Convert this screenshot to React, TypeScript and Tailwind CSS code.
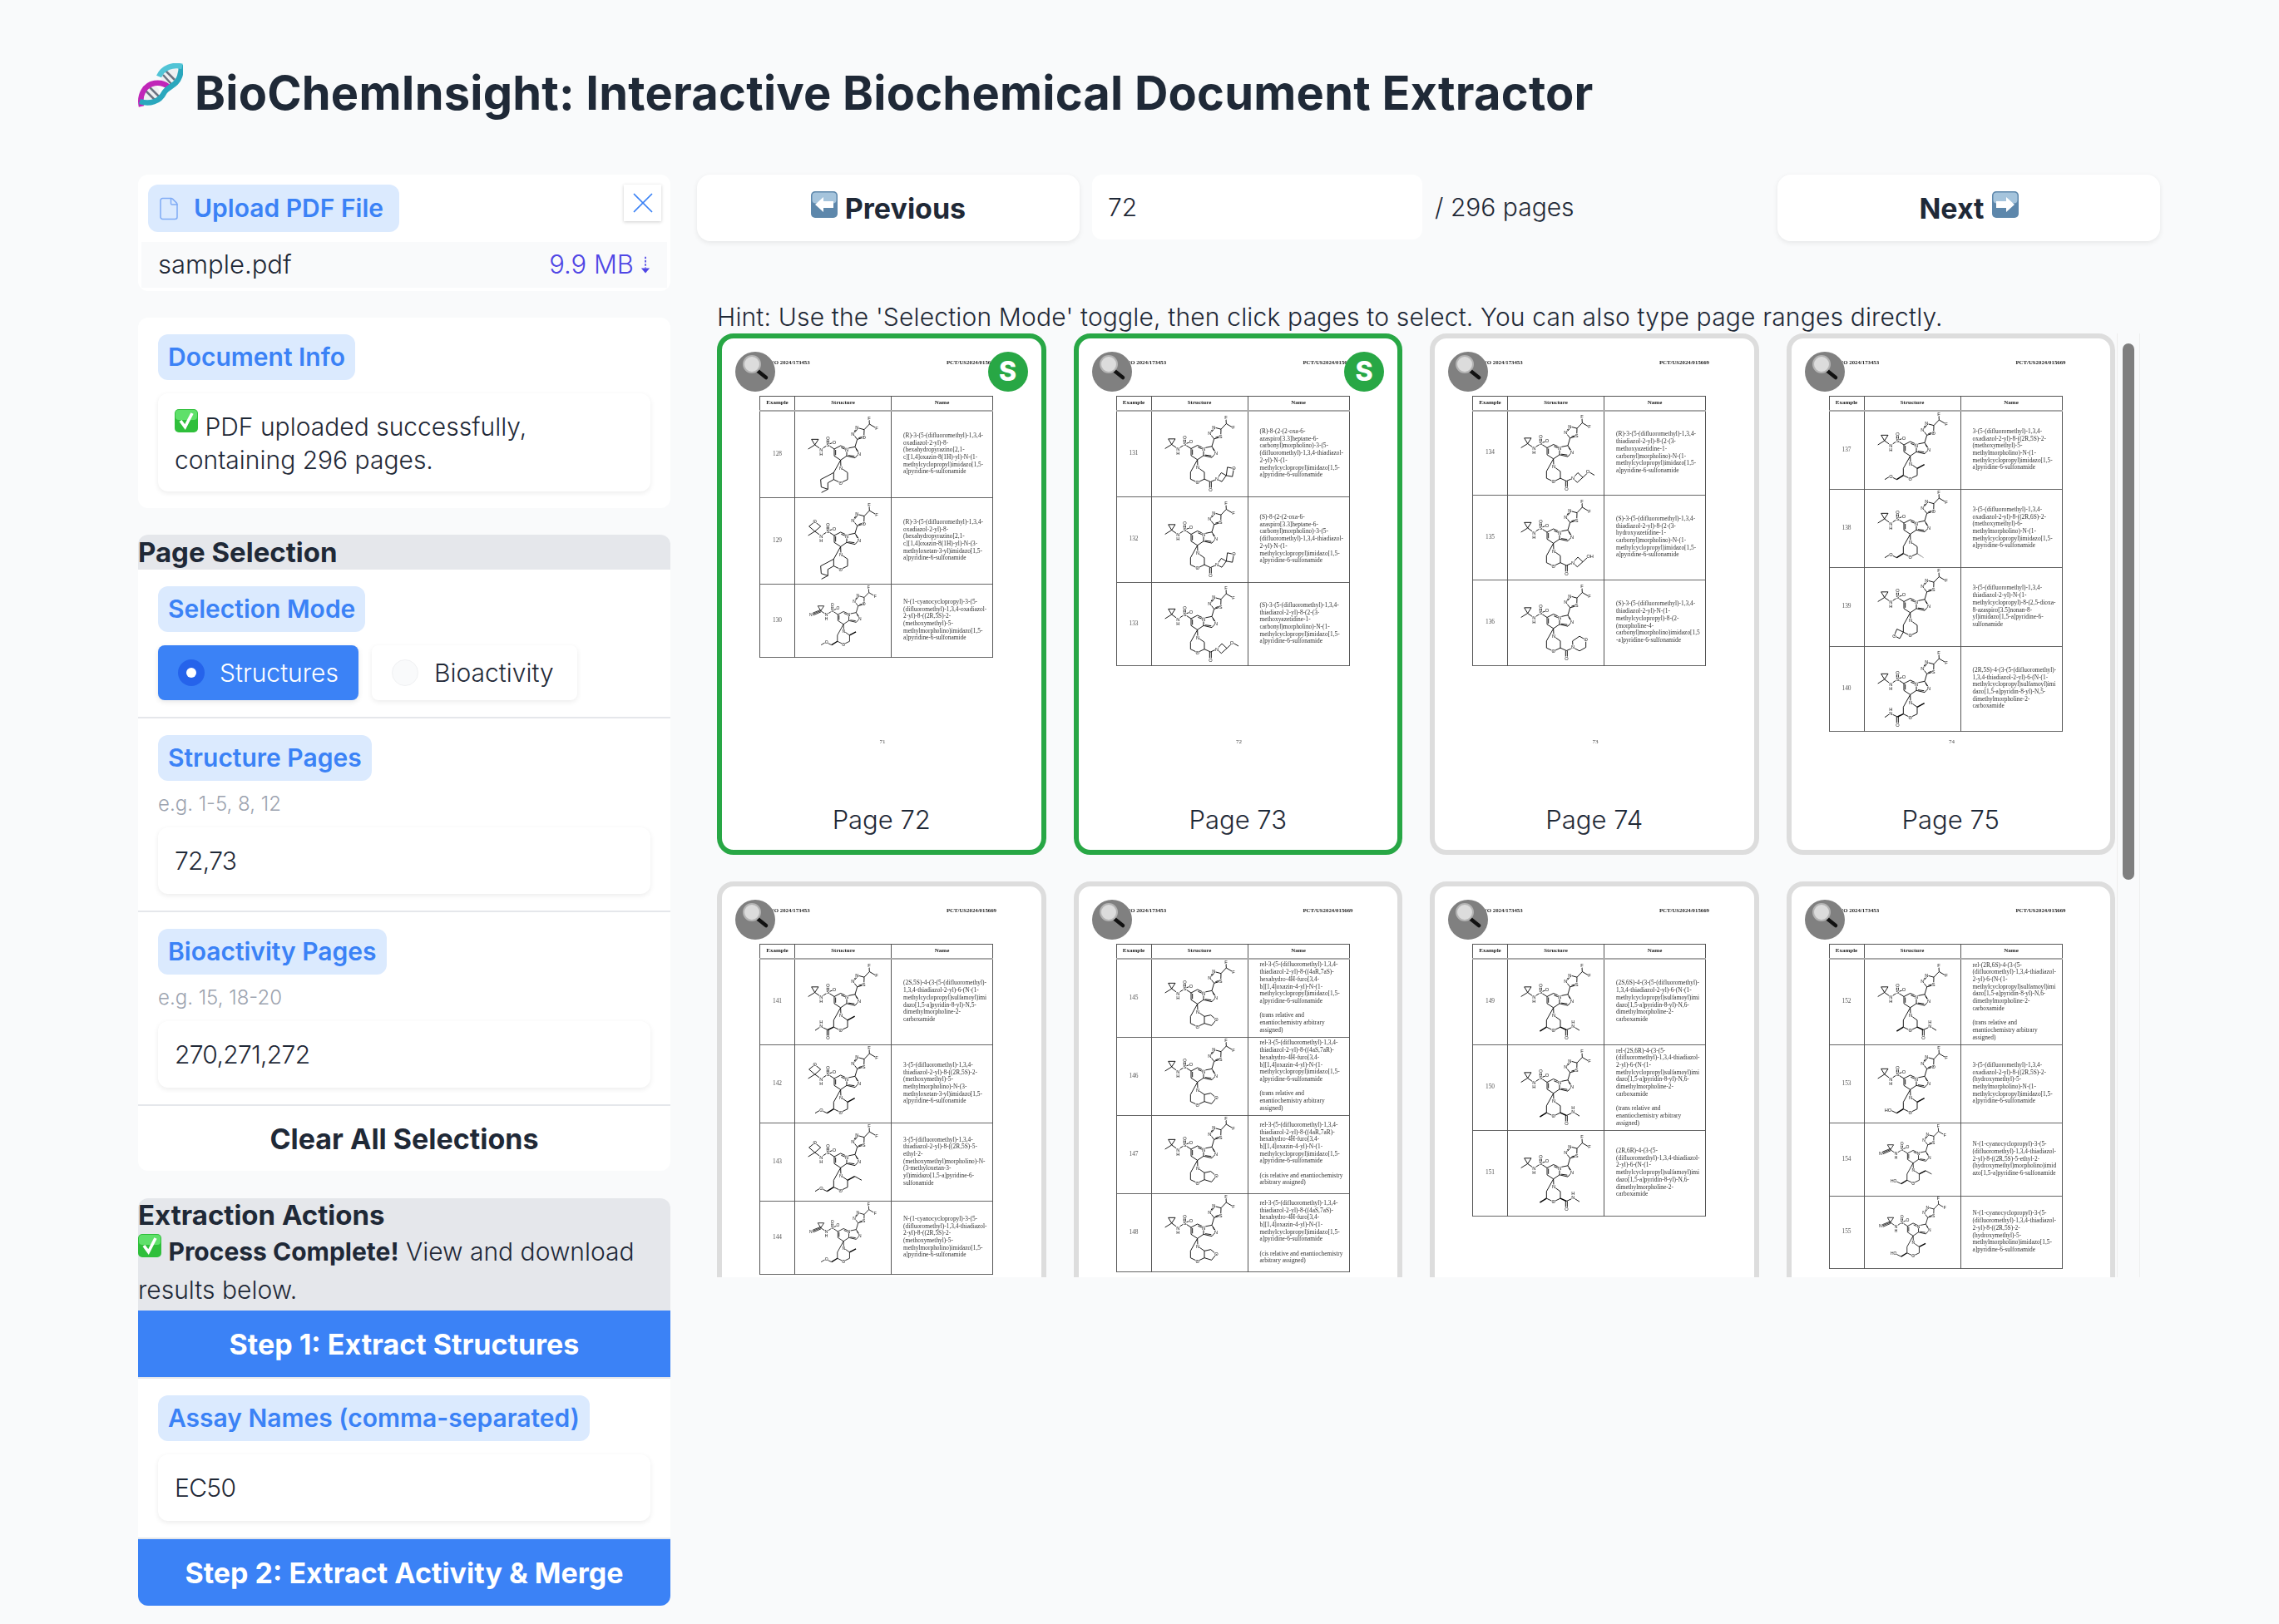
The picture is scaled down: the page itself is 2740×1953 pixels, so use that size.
import type { ReactNode } from "react";
import { File, X } from "lucide-react";

type Row = { n: number; h: number; head: string; het: string; tail: string; name: string };
type Page = { label: number; no?: string; selected?: boolean; rows: Row[] };

const cp = "cp";
const ox = "ox";
const cn = "cn";

const pages: Page[] = [
  {
    label: 72, no: "71", selected: true,
    rows: [
      { n: 128, h: 104, head: cp, het: "O", tail: "pip", name: "(R)-3-(5-(difluoromethyl)-1,3,4-\noxadiazol-2-yl)-8-\n(hexahydropyrazino[2,1-\nc][1,4]oxazin-8(1H)-yl)-N-(1-\nmethylcyclopropyl)imidazo[1,5-\na]pyridine-6-sulfonamide" },
      { n: 129, h: 104, head: ox, het: "O", tail: "pip", name: "(R)-3-(5-(difluoromethyl)-1,3,4-\noxadiazol-2-yl)-8-\n(hexahydropyrazino[2,1-\nc][1,4]oxazin-8(1H)-yl)-N-(3-\nmethyloxetan-3-yl)imidazo[1,5-\na]pyridine-6-sulfonamide" },
      { n: 130, h: 88, head: cn, het: "O", tail: "ome", name: "N-(1-cyanocyclopropyl)-3-(5-\n(difluoromethyl)-1,3,4-oxadiazol-\n2-yl)-8-((2R,5S)-2-\n(methoxymethyl)-5-\nmethylmorpholino)imidazo[1,5-\na]pyridine-6-sulfonamide" },
    ],
  },
  {
    label: 73, no: "72", selected: true,
    rows: [
      { n: 131, h: 103, head: cp, het: "S", tail: "spiro", name: "(R)-8-(2-(2-oxa-6-\nazaspiro[3.3]heptane-6-\ncarbonyl)morpholino)-3-(5-\n(difluoromethyl)-1,3,4-thiadiazol-\n2-yl)-N-(1-\nmethylcyclopropyl)imidazo[1,5-\na]pyridine-6-sulfonamide" },
      { n: 132, h: 103, head: cp, het: "S", tail: "spiro", name: "(S)-8-(2-(2-oxa-6-\nazaspiro[3.3]heptane-6-\ncarbonyl)morpholino)-3-(5-\n(difluoromethyl)-1,3,4-thiadiazol-\n2-yl)-N-(1-\nmethylcyclopropyl)imidazo[1,5-\na]pyridine-6-sulfonamide" },
      { n: 133, h: 100, head: cp, het: "S", tail: "azome", name: "(S)-3-(5-(difluoromethyl)-1,3,4-\nthiadiazol-2-yl)-8-(2-(3-\nmethoxyazetidine-1-\ncarbonyl)morpholino)-N-(1-\nmethylcyclopropyl)imidazo[1,5-\na]pyridine-6-sulfonamide" },
    ],
  },
  {
    label: 74, no: "73",
    rows: [
      { n: 134, h: 101, head: cp, het: "S", tail: "azome", name: "(R)-3-(5-(difluoromethyl)-1,3,4-\nthiadiazol-2-yl)-8-(2-(3-\nmethoxyazetidine-1-\ncarbonyl)morpholino)-N-(1-\nmethylcyclopropyl)imidazo[1,5-\na]pyridine-6-sulfonamide" },
      { n: 135, h: 102, head: cp, het: "S", tail: "azoh", name: "(S)-3-(5-(difluoromethyl)-1,3,4-\nthiadiazol-2-yl)-8-(2-(3-\nhydroxyazetidine-1-\ncarbonyl)morpholino)-N-(1-\nmethylcyclopropyl)imidazo[1,5-\na]pyridine-6-sulfonamide" },
      { n: 136, h: 103, head: cp, het: "S", tail: "morph", name: "(S)-3-(5-(difluoromethyl)-1,3,4-\nthiadiazol-2-yl)-N-(1-\nmethylcyclopropyl)-8-(2-\n(morpholine-4-\ncarbonyl)morpholino)imidazo[1,5\n-a]pyridine-6-sulfonamide" },
    ],
  },
  {
    label: 75, no: "74",
    rows: [
      { n: 137, h: 94, head: cp, het: "O", tail: "ome", name: "3-(5-(difluoromethyl)-1,3,4-\noxadiazol-2-yl)-8-((2R,5S)-2-\n(methoxymethyl)-5-\nmethylmorpholino)-N-(1-\nmethylcyclopropyl)imidazo[1,5-\na]pyridine-6-sulfonamide" },
      { n: 138, h: 94, head: cp, het: "O", tail: "ome6", name: "3-(5-(difluoromethyl)-1,3,4-\noxadiazol-2-yl)-8-((2R,6S)-2-\n(methoxymethyl)-6-\nmethylmorpholino)-N-(1-\nmethylcyclopropyl)imidazo[1,5-\na]pyridine-6-sulfonamide" },
      { n: 139, h: 95, head: cp, het: "S", tail: "oxa", name: "3-(5-(difluoromethyl)-1,3,4-\nthiadiazol-2-yl)-N-(1-\nmethylcyclopropyl)-8-(2,5-dioxa-\n8-azaspiro[3.5]nonan-8-\nyl)imidazo[1,5-a]pyridine-6-\nsulfonamide" },
      { n: 140, h: 102, head: cp, het: "S", tail: "amide", name: "(2R,5S)-4-(3-(5-(difluoromethyl)-\n1,3,4-thiadiazol-2-yl)-6-(N-(1-\nmethylcyclopropyl)sulfamoyl)imi\ndazo[1,5-a]pyridin-8-yl)-N,5-\ndimethylmorpholine-2-\ncarboxamide" },
    ],
  },
  {
    label: 76,
    rows: [
      { n: 141, h: 103, head: cp, het: "S", tail: "amide", name: "(2S,5S)-4-(3-(5-(difluoromethyl)-\n1,3,4-thiadiazol-2-yl)-6-(N-(1-\nmethylcyclopropyl)sulfamoyl)imi\ndazo[1,5-a]pyridin-8-yl)-N,5-\ndimethylmorpholine-2-\ncarboxamide" },
      { n: 142, h: 94, head: ox, het: "S", tail: "ome", name: "3-(5-(difluoromethyl)-1,3,4-\nthiadiazol-2-yl)-8-((2R,5S)-2-\n(methoxymethyl)-5-\nmethylmorpholino)-N-(3-\nmethyloxetan-3-yl)imidazo[1,5-\na]pyridine-6-sulfonamide" },
      { n: 143, h: 94, head: ox, het: "S", tail: "ethyl", name: "3-(5-(difluoromethyl)-1,3,4-\nthiadiazol-2-yl)-8-((2R,5S)-5-\nethyl-2-\n(methoxymethyl)morpholino)-N-\n(3-methyloxetan-3-\nyl)imidazo[1,5-a]pyridine-6-\nsulfonamide" },
      { n: 144, h: 88, head: cn, het: "S", tail: "ome", name: "N-(1-cyanocyclopropyl)-3-(5-\n(difluoromethyl)-1,3,4-thiadiazol-\n2-yl)-8-((2R,5S)-2-\n(methoxymethyl)-5-\nmethylmorpholino)imidazo[1,5-\na]pyridine-6-sulfonamide" },
    ],
  },
  {
    label: 77,
    rows: [
      { n: 145, h: 94, head: cp, het: "S", tail: "furo", name: "rel-3-(5-(difluoromethyl)-1,3,4-\nthiadiazol-2-yl)-8-((4aR,7aS)-\nhexahydro-4H-furo[3,4-\nb][1,4]oxazin-4-yl)-N-(1-\nmethylcyclopropyl)imidazo[1,5-\na]pyridine-6-sulfonamide\n\n(trans relative and\nenantiochemistry arbitrary\nassigned)" },
      { n: 146, h: 94, head: cp, het: "S", tail: "furo", name: "rel-3-(5-(difluoromethyl)-1,3,4-\nthiadiazol-2-yl)-8-((4aS,7aR)-\nhexahydro-4H-furo[3,4-\nb][1,4]oxazin-4-yl)-N-(1-\nmethylcyclopropyl)imidazo[1,5-\na]pyridine-6-sulfonamide\n\n(trans relative and\nenantiochemistry arbitrary\nassigned)" },
      { n: 147, h: 94, head: cp, het: "S", tail: "furo", name: "rel-3-(5-(difluoromethyl)-1,3,4-\nthiadiazol-2-yl)-8-((4aR,7aR)-\nhexahydro-4H-furo[3,4-\nb][1,4]oxazin-4-yl)-N-(1-\nmethylcyclopropyl)imidazo[1,5-\na]pyridine-6-sulfonamide\n\n(cis relative and enantiochemistry\narbitrary assigned)" },
      { n: 148, h: 94, head: cp, het: "S", tail: "furo", name: "rel-3-(5-(difluoromethyl)-1,3,4-\nthiadiazol-2-yl)-8-((4aS,7aS)-\nhexahydro-4H-furo[3,4-\nb][1,4]oxazin-4-yl)-N-(1-\nmethylcyclopropyl)imidazo[1,5-\na]pyridine-6-sulfonamide\n\n(cis relative and enantiochemistry\narbitrary assigned)" },
    ],
  },
  {
    label: 78,
    rows: [
      { n: 149, h: 103, head: cp, het: "S", tail: "amideR", name: "(2S,6S)-4-(3-(5-(difluoromethyl)-\n1,3,4-thiadiazol-2-yl)-6-(N-(1-\nmethylcyclopropyl)sulfamoyl)imi\ndazo[1,5-a]pyridin-8-yl)-N,6-\ndimethylmorpholine-2-\ncarboxamide" },
      { n: 150, h: 103, head: cp, het: "S", tail: "amideR", name: "rel-(2S,6R)-4-(3-(5-\n(difluoromethyl)-1,3,4-thiadiazol-\n2-yl)-6-(N-(1-\nmethylcyclopropyl)sulfamoyl)imi\ndazo[1,5-a]pyridin-8-yl)-N,6-\ndimethylmorpholine-2-\ncarboxamide\n\n(trans relative and\nenantiochemistry arbitrary\nassigned)" },
      { n: 151, h: 103, head: cp, het: "S", tail: "amideR", name: "(2R,6R)-4-(3-(5-\n(difluoromethyl)-1,3,4-thiadiazol-\n2-yl)-6-(N-(1-\nmethylcyclopropyl)sulfamoyl)imi\ndazo[1,5-a]pyridin-8-yl)-N,6-\ndimethylmorpholine-2-\ncarboxamide" },
    ],
  },
  {
    label: 79,
    rows: [
      { n: 152, h: 103, head: cp, het: "S", tail: "amideR", name: "rel-(2R,6S)-4-(3-(5-\n(difluoromethyl)-1,3,4-thiadiazol-\n2-yl)-6-(N-(1-\nmethylcyclopropyl)sulfamoyl)imi\ndazo[1,5-a]pyridin-8-yl)-N,6-\ndimethylmorpholine-2-\ncarboxamide\n\n(trans relative and\nenantiochemistry arbitrary\nassigned)" },
      { n: 153, h: 94, head: cp, het: "O", tail: "ho", name: "3-(5-(difluoromethyl)-1,3,4-\noxadiazol-2-yl)-8-((2R,5S)-2-\n(hydroxymethyl)-5-\nmethylmorpholino)-N-(1-\nmethylcyclopropyl)imidazo[1,5-\na]pyridine-6-sulfonamide" },
      { n: 154, h: 88, head: cn, het: "S", tail: "hoEt", name: "N-(1-cyanocyclopropyl)-3-(5-\n(difluoromethyl)-1,3,4-thiadiazol-\n2-yl)-8-((2R,5S)-5-ethyl-2-\n(hydroxymethyl)morpholino)imid\nazo[1,5-a]pyridine-6-sulfonamide" },
      { n: 155, h: 87, head: cn, het: "S", tail: "ho", name: "N-(1-cyanocyclopropyl)-3-(5-\n(difluoromethyl)-1,3,4-thiadiazol-\n2-yl)-8-((2R,5S)-2-\n(hydroxymethyl)-5-\nmethylmorpholino)imidazo[1,5-\na]pyridine-6-sulfonamide" },
    ],
  },
];

function L({ x, y, t }: { x: number; y: number; t: string }) {
  return (
    <text x={x} y={y + 6} textAnchor="middle" fontSize="17" fontFamily="Liberation Sans" fill="#111" stroke="#fff" strokeWidth="4" paintOrder="stroke">
      {t}
    </text>
  );
}

function Tail({ kind }: { kind: string }) {
  const carbonyl = <path d="M189 235L211 245M208 245V268M214 245V268M211 245L234 235" />;
  const methyl = <path d="M189 210L215 196" strokeWidth="4.5" />;
  const arm = <path d="M139 235L115 250" strokeWidth="4.5" />;
  switch (kind) {
    case "pip":
      return <path d="M139 235L118 247L118 270L95 282M139 210L117 222L92 235L94 262L118 270" />;
    case "spiro":
      return (
        <>
          {carbonyl}
          <path d="M234 235L250 212L268 222L252 244ZM268 222L272 192L295 197L290 226Z" />
          <L x={234} y={235} t="N" />
          <L x={295} y={197} t="O" />
          <L x={211} y={275} t="O" />
        </>
      );
    case "azome":
    case "azoh":
      return (
        <>
          {carbonyl}
          <path d="M234 235L252 215L270 232L250 250ZM270 232L288 215" />
          {kind === "azome" && <path d="M292 212L312 224" />}
          <L x={234} y={235} t="N" />
          <L x={kind === "azome" ? 288 : 296} y={212} t={kind === "azome" ? "O" : "OH"} />
          <L x={211} y={275} t="O" />
        </>
      );
    case "morph":
      return (
        <>
          {carbonyl}
          <path d="M234 233L233 210L258 193L281 206L281 233L258 246Z" />
          <L x={234} y={233} t="N" />
          <L x={281} y={206} t="O" />
          <L x={211} y={275} t="O" />
        </>
      );
    case "ome":
    case "ethyl":
      return (
        <>
          {methyl}
          {kind === "ethyl" && <path d="M215 196L240 210" />}
          {arm}
          <path d="M115 250L95 240M92 238L72 250" />
          <L x={94} y={238} t="O" />
        </>
      );
    case "ome6":
      return (
        <>
          <path d="M189 235L212 250" strokeDasharray="2 2" />
          {arm}
          <path d="M115 250L95 240M92 238L72 250" />
          <L x={94} y={238} t="O" />
        </>
      );
    case "ho":
    case "hoEt":
      return (
        <>
          {methyl}
          {kind === "hoEt" && <path d="M215 196L240 210" />}
          {arm}
          <path d="M115 250L95 240" />
          <L x={84} y={238} t="HO" />
        </>
      );
    case "oxa":
      return (
        <>
          <path d="M139 235L116 224L106 248L126 258Z" />
          <L x={106} y={250} t="O" />
        </>
      );
    case "amide":
      return (
        <>
          {methyl}
          <path d="M139 235L118 245" strokeWidth="4.5" />
          <path d="M118 245L94 234M115 245V268M121 245V268M88 236L72 247" />
          <L x={94} y={233} t="N" />
          <L x={94} y={217} t="H" />
          <L x={118} y={275} t="O" />
        </>
      );
    case "amideR":
      return (
        <>
          {arm}
          <path d="M189 235L211 245" strokeWidth="4.5" />
          <path d="M211 245L235 234M208 245V268M214 245V268M241 236L258 247" />
          <L x={235} y={233} t="N" />
          <L x={235} y={217} t="H" />
          <L x={211} y={275} t="O" />
        </>
      );
    case "furo":
      return (
        <>
          <path d="M189 210L212 205L232 222L215 243L189 235" />
          <L x={232} y={222} t="O" />
        </>
      );
    default:
      return null;
  }
}

// generic imidazopyridine sulfonamide drawing, coordinates are 3x the cell pixels
function Molecule({ head, het, tail, h }: { head: string; het: string; tail: string; h: number }) {
  const top = (292 - h * 3) / 2;
  const scale = h < 92 ? 0.88 : 1;
  return (
    <svg viewBox={`0 ${top} 348 ${(h - 1) * 3}`} width="116" height={h - 1} className="block">
      <g transform={`translate(${scale < 1 ? 30 : 0} ${scale < 1 ? 12 : 0}) scale(${scale})`} fill="none" stroke="#000" strokeWidth="2.7">
        {head === "cn" ? (
          <path d="M59 90H84L71 110ZM71 110L88 122M71 110L36 124M70 106L38 119M72 114L40 128" />
        ) : head === "ox" ? (
          <path d="M71 110L92 92L71 75L50 92ZM71 110L47 125M71 110L88 122" />
        ) : (
          <path d="M59 90H84L71 110ZM71 110L47 125M71 110L88 122" />
        )}
        <path d="M100 122L118 110M115 108V92M121 108V92M120 108L136 102M118 110L141 125" />
        <path d="M141 125L164 113L186 123L186 150L164 165L141 150Z" />
        <path d="M146 128V147M166 120L181 126M186 123L216 117L231 140L216 157L186 150M219 124L228 138M214 151L192 148" />
        <path d="M216 117L224 90M224 90L208 70L223 48L249 55L248 83ZM212 68L225 53M229 85L245 80M249 55L268 35L267 20M268 35L288 47" />
        <path d="M164 165L165 193L189 210L189 235L164 247L139 235L139 210Z" />
        <Tail kind={tail} />
        {head === "cn" && <L x={30} y={125} t="N" />}
        {head === "ox" && <L x={71} y={75} t="O" />}
        <L x={94} y={127} t="N" />
        <L x={94} y={143} t="H" />
        <L x={118} y={110} t="S" />
        <L x={118} y={85} t="O" />
        <L x={141} y={100} t="O" />
        <L x={186} y={127} t="N" />
        <L x={231} y={142} t="N" />
        <L x={208} y={70} t="N" />
        <L x={223} y={48} t="N" />
        <L x={248} y={83} t={het} />
        <L x={267} y={13} t="F" />
        <L x={294} y={50} t="F" />
        <L x={165} y={193} t="N" />
        <L x={164} y={247} t="O" />
      </g>
    </svg>
  );
}

function Check() {
  return (
    <svg viewBox="0 0 28 36" className="inline-block w-[28px] h-[36px] align-[-4px]">
      <rect x="0" y="0" width="28" height="28" rx="5" fill="#2fbf3b" />
      <rect x="1" y="1" width="26" height="12" rx="4" fill="#5fe06a" />
      <path d="M7 14L12.5 21.5L21 5" fill="none" stroke="#fff" strokeWidth="3.6" />
    </svg>
  );
}

function ArrowBox({ left }: { left?: boolean }) {
  return (
    <svg viewBox="0 0 32 32" className="w-[32px] h-[32px]">
      <rect width="32" height="32" rx="5" fill="#5d87ab" />
      <rect x="1.5" y="1.5" width="29" height="13" rx="4" fill="#a5c4dc" />
      <path d={left ? "M5 16L15 7V12H27V20H15V25Z" : "M27 16L17 7V12H5V20H17V25Z"} fill="#fff" />
    </svg>
  );
}

function Magnifier() {
  return (
    <svg viewBox="0 0 48 48" className="w-[48px] h-[48px]">
      <circle cx="24" cy="24" r="24" fill="#808080" />
      <path d="M27 23L37 31" stroke="#111" strokeWidth="4.5" strokeLinecap="round" />
      <circle cx="20" cy="15" r="10" fill="#dcdcdc" stroke="#b4b4b4" strokeWidth="2" />
    </svg>
  );
}

function Dna() {
  return (
    <svg viewBox="0 0 54 54" className="w-[54px] h-[54px] shrink-0">
      <ellipse cx="15" cy="38" rx="12" ry="8" transform="rotate(-45 15 38)" fill="#eef0f2" />
      <ellipse cx="38" cy="15" rx="12" ry="8" transform="rotate(-45 38 15)" fill="#eef0f2" />
      <path d="M9 33L20 44M14 29L25 40M33 9L44 20M30 14L40 25" stroke="#6b7280" strokeWidth="2.5" />
      <path d="M4 52C1 38 8 26 20 24C27 23 31 24 36 28" fill="none" stroke="#c026b8" strokeWidth="6.5" />
      <path d="M2 46C14 50 26 46 31 36C35 28 46 28 50 16C52 10 52 6 52 2" fill="none" stroke="#2aa7bd" strokeWidth="6.5" />
      <path d="M53 4C42 1 30 5 25 16" fill="none" stroke="#52c4d6" strokeWidth="6.5" />
    </svg>
  );
}

function Chip({ children }: { children: ReactNode }) {
  return <div className="inline-flex w-fit items-center rounded-xl bg-[#dbeafe] px-3 h-[55px] text-[30px] font-semibold text-[#3b82f6]">{children}</div>;
}

function TextBox({ value }: { value: string }) {
  return <div className="flex h-[80px] items-center rounded-xl bg-white px-5 text-[30px] font-light tracking-[-0.7px] shadow-[0_2px_6px_rgba(0,0,0,0.08)]">{value}</div>;
}

function PageCard({ page }: { page: Page }) {
  return (
    <div className={`relative h-[627px] rounded-[20px] border-[6px] bg-white ${page.selected ? "border-[#28a745]" : "border-[#dddddd]"}`}>
      <div className="absolute left-[16px] top-[16px] z-10"><Magnifier /></div>
      {page.selected && (
        <div className="absolute right-[16px] top-[16px] z-10 flex h-[48px] w-[48px] items-center justify-center rounded-full bg-[#28a745] text-[32px] font-extrabold text-white">S</div>
      )}
      <div className="flex h-[556px] flex-col pl-[45px] pt-[24px] font-['Liberation_Serif',serif] text-[#222] blur-[0.3px]">
        <div className="flex h-[45px] w-[280px] justify-between pl-[11px] text-[6.8px] font-bold leading-[10px]">
          <span>WO 2024/173453</span>
          <span className="-mr-[5px]">PCT/US2024/015669</span>
        </div>
        <table className="w-[280px] table-fixed border-collapse border border-[#555] text-[7.4px] leading-[8.7px]">
          <colgroup>
            <col className="w-[42px]" />
            <col className="w-[116px]" />
            <col className="w-[122px]" />
          </colgroup>
          <thead>
            <tr className="h-[17px] border-b-2 border-b-[#aaa] text-[7px] font-bold">
              <th className="border-x border-[#555] text-center">Example</th>
              <th className="border-x border-[#555] text-center">Structure</th>
              <th className="border-x border-[#555] text-center">Name</th>
            </tr>
          </thead>
          <tbody>
            {page.rows.map((row) => (
              <tr key={row.n} style={{ height: row.h }} className="border-b border-[#666]">
                <td className="border-x border-[#555] text-center text-[#555]">{row.n}</td>
                <td className="border-x border-[#555] p-0"><Molecule head={row.head} het={row.het} tail={row.tail} h={row.h} /></td>
                <td className="overflow-hidden border-x border-[#555] pl-[14px] pr-0 whitespace-pre-line text-[#333]">{row.name}</td>
              </tr>
            ))}
          </tbody>
        </table>
        {page.no && <div className="mb-[66px] mt-auto w-[280px] pl-[16px] text-center text-[7px] leading-[10px] text-[#444]">{page.no}</div>}
      </div>
      <div className="flex h-[46px] items-center justify-center text-[31px] font-light">Page {page.label}</div>
    </div>
  );
}

export default function App() {
  return (
    <div className="min-h-[1953px] bg-[#f9fafb] pl-[166px] pb-[22px] pt-[75px] font-['Inter',sans-serif] text-[#1f2937]">
      <div className="flex h-[55px] items-center gap-[14px]">
        <Dna />
        <h1 className="mt-[18px] text-[56px] font-bold tracking-[0.2px]">BioChemInsight: Interactive Biochemical Document Extractor</h1>
      </div>

      <div className="mt-[80px] flex gap-[32px]">
        {/* Sidebar */}
        <div className="flex w-[640px] shrink-0 flex-col">
          <div className="h-[140px] rounded-xl bg-white">
            <div className="flex items-start justify-between pl-[12px] pr-[11px] pt-[12px]">
              <div className="flex h-[57px] w-[302px] items-center gap-[15px] rounded-xl bg-[#dbeafe] pl-[10px] text-[30px] font-semibold text-[#3b82f6]">
                <File className="h-[30px] w-[30px] text-[#7fabf5]" strokeWidth={1.2} />
                Upload PDF File
              </div>
              <div className="flex h-[44px] w-[45px] items-center justify-center bg-white shadow-[0_1px_4px_rgba(0,0,0,0.2)]">
                <X className="h-[42px] w-[42px] text-[#3b82f6]" strokeWidth={1} />
              </div>
            </div>
            <div className="mx-[4px] mt-[12px] flex h-[55px] items-center justify-between bg-[#f9fafb] pl-[20px] pr-[20px] text-[31px] font-light">
              <span>sample.pdf</span>
              <span className="flex items-center gap-[8px] text-[#4f46e5]">
                9.9 MB
                <svg viewBox="0 0 14 28" className="h-[28px] w-[12px]">
                  <path d="M7 2V18" stroke="#4f46e5" strokeWidth="2" strokeDasharray="3 2" />
                  <path d="M1 18H13L7 25Z" fill="#4f46e5" />
                </svg>
              </span>
            </div>
          </div>

          <div className="mt-[32px] rounded-xl bg-white px-[24px] pt-[20px] pb-[20px]">
            <Chip>Document Info</Chip>
            <div className="mt-[16px] h-[118px] rounded-xl bg-white px-[20px] pt-[19px] text-[30px] font-light leading-[40px] shadow-[0_2px_6px_rgba(0,0,0,0.08)]">
              <Check /> PDF uploaded successfully, containing 296 pages.
            </div>
          </div>

          <div className="mt-[32px] overflow-hidden rounded-xl bg-white">
            <div className="h-[42px] bg-[#e5e7eb] text-[33px] font-bold leading-[42px]">Page Selection</div>
            <div className="border-b-2 border-[#e5e7eb] px-[24px] pt-[20px] pb-[20px]">
              <Chip>Selection Mode</Chip>
              <div className="mt-[16px] flex gap-[16px] text-[30px] font-light">
                <div className="flex h-[66px] w-[241px] items-center gap-[18px] rounded-lg bg-[#3b82f6] px-[24px] text-white shadow-[0_2px_6px_rgba(0,0,0,0.1)]">
                  <span className="flex h-[32px] w-[32px] items-center justify-center rounded-full bg-[#2563eb]"><span className="h-[12px] w-[12px] rounded-full bg-white" /></span>
                  Structures
                </div>
                <div className="flex h-[66px] w-[247px] items-center gap-[19px] rounded-lg bg-white px-[24px] shadow-[0_2px_6px_rgba(0,0,0,0.08)]">
                  <span className="h-[32px] w-[32px] rounded-full border border-[#f0f1f3] bg-[#f9fafb]" />
                  Bioactivity
                </div>
              </div>
            </div>
            <div className="border-b-2 border-[#e5e7eb] px-[24px] pt-[20px] pb-[20px]">
              <Chip>Structure Pages</Chip>
              <div className="flex h-[56px] items-center text-[24px] font-light text-[#9ca3af]">e.g. 1-5, 8, 12</div>
              <TextBox value="72,73" />
            </div>
            <div className="border-b-2 border-[#e5e7eb] px-[24px] pt-[20px] pb-[20px]">
              <Chip>Bioactivity Pages</Chip>
              <div className="flex h-[56px] items-center text-[24px] font-light text-[#9ca3af]">e.g. 15, 18-20</div>
              <TextBox value="270,271,272" />
            </div>
            <div className="flex h-[78px] items-center justify-center text-[34px] font-bold">Clear All Selections</div>
          </div>

          <div className="mt-[33px] overflow-hidden rounded-xl bg-white">
            <div className="h-[135px] bg-[#e5e7eb]">
              <div className="h-[41px] text-[33px] font-bold leading-[40px]">Extraction Actions</div>
              <p className="text-[30px] font-light leading-[46px]">
                <Check /> <b className="font-bold">Process Complete!</b> View and download results below.
              </p>
            </div>
            <div className="flex h-[80px] items-center justify-center bg-[#3b82f6] text-[34px] font-bold text-white">Step 1: Extract Structures</div>
            <div className="border-y-2 border-[#e5e7eb] px-[24px] pt-[20px] pb-[20px]">
              <Chip>Assay Names (comma-separated)</Chip>
              <div className="mt-[16px]"><TextBox value="EC50" /></div>
            </div>
            <div className="flex h-[80px] items-center justify-center bg-[#3b82f6] text-[34px] font-bold text-white">Step 2: Extract Activity &amp; Merge</div>
          </div>
        </div>

        {/* Viewer */}
        <div className="w-[1759px] shrink-0">
          <div className="flex items-start">
            <div className="flex h-[80px] w-[460px] items-center justify-center gap-[9px] rounded-2xl bg-white text-[34px] font-bold shadow-[0_2px_6px_rgba(0,0,0,0.08)]">
              <span className="-mt-[8px]"><ArrowBox left /></span>
              Previous
            </div>
            <div className="ml-[15px] flex h-[78px] w-[397px] items-center rounded-xl bg-white px-[19px] text-[30px] font-light">72</div>
            <div className="ml-[15px] flex h-[78px] items-center text-[30px] font-light">/ 296 pages</div>
            <div className="ml-auto flex h-[80px] w-[460px] items-center justify-center gap-[9px] rounded-2xl bg-white text-[34px] font-bold shadow-[0_2px_6px_rgba(0,0,0,0.08)]">
              Next
              <span className="-mt-[8px]"><ArrowBox /></span>
            </div>
          </div>

          <div className="ml-[24px] mt-[72px] flex h-[39px] items-center text-[30px] font-light tracking-[0.17px]">
            Hint: Use the 'Selection Mode' toggle, then click pages to select. You can also type page ranges directly.
          </div>

          <div className="ml-[24px] flex h-[1135px] overflow-hidden">
            <div className="grid w-[1681px] shrink-0 grid-cols-4 gap-x-[33px] gap-y-[32px] content-start">
              {pages.map((p) => (
                <PageCard key={p.label} page={p} />
              ))}
            </div>
            <div className="ml-[2px] w-[28px] border-x border-[#eeeeee] px-[6px] pt-[12px]">
              <div className="h-[645px] w-[14px] rounded-full bg-[#7f7f7f]" />
            </div>
          </div>
        </div>
      </div>
    </div>
  );
}
